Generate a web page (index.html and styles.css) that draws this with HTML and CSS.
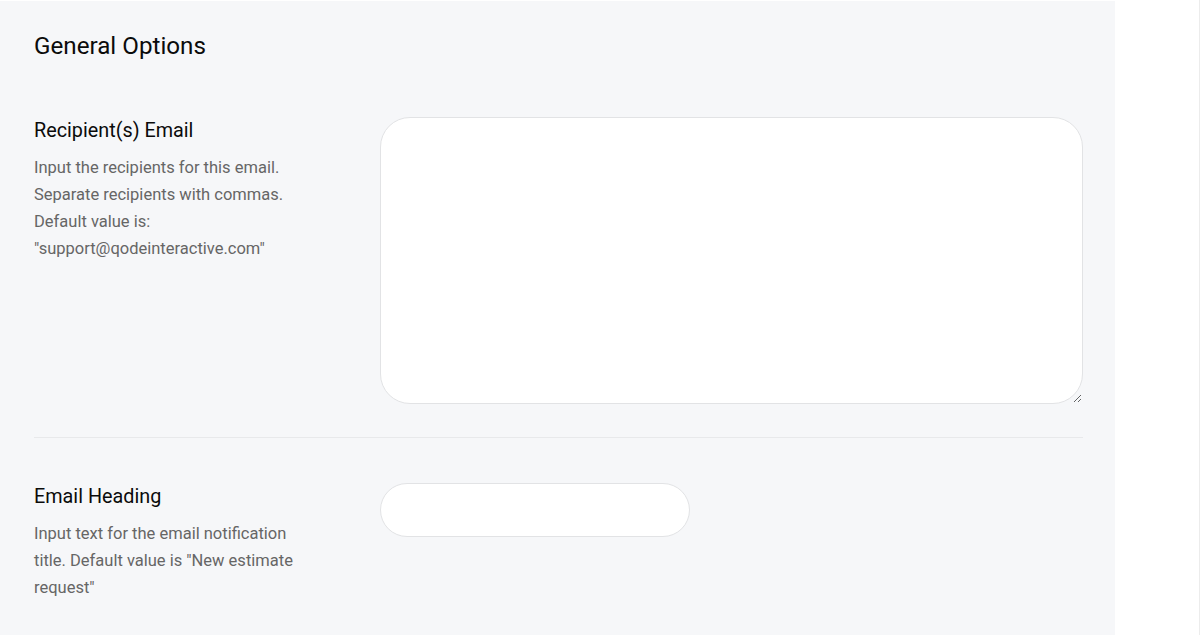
FILE: index.html
```html
<!DOCTYPE html>
<html lang="en">
<head>
<meta charset="utf-8">
<title>General Options</title>
<link rel="stylesheet" href="styles.css">
</head>
<body>
<div class="page">
  <main class="panel">
    <h2 class="panel-title">General Options</h2>
    <section class="option-row option-row--divided">
      <div class="option-label">
        <h3 class="option-heading">Recipient(s) Email</h3>
        <p class="option-desc">Input the recipients for this email. Separate recipients with commas. Default value is: "support@qodeinteractive.com"</p>
      </div>
      <div class="option-field">
        <textarea class="field-textarea"></textarea>
      </div>
    </section>
    <section class="option-row option-row--second">
      <div class="option-label">
        <h3 class="option-heading">Email Heading</h3>
        <p class="option-desc">Input text for the email notification title. Default value is "New estimate request"</p>
      </div>
      <div class="option-field">
        <input class="field-input" type="text">
      </div>
    </section>
  </main>
  <div class="spacer"></div>
  <div class="edge"></div>
</div>
</body>
</html>
```

FILE: styles.css
```css
html, body {
  margin: 0;
  padding: 0;
  background: #ffffff;
  height: 100%;
}

body {
  font-family: Roboto, "Liberation Sans", Arial, sans-serif;
  overflow: hidden;
}

.page {
  display: flex;
  height: 100%;
}

.panel {
  width: 1115px;
  flex: none;
  margin-top: 1px;
  background: #f6f7f9;
  padding: 30px 32px 0 34px;
  box-sizing: border-box;
  min-height: 634px;
}

.spacer {
  flex: 1;
}

.edge {
  width: 1px;
  background: #ececec;
}

.panel-title {
  margin: 0 0 56px;
  font-size: 24.2px;
  line-height: 30px;
  font-weight: 400;
  color: #0b0b0b;
}

.option-row {
  display: flex;
  gap: 76px;
}

.option-row--divided {
  padding-bottom: 33px;
  border-bottom: 1px solid #e8e9eb;
}

.option-row--second {
  padding-top: 45px;
}

.option-label {
  width: 270px;
  flex: none;
}

.option-heading {
  margin: 0;
  padding-top: 1px;
  font-size: 19.8px;
  line-height: 26px;
  font-weight: 400;
  color: #0b0b0b;
}

.option-desc {
  margin: 10px 0 0;
  font-size: 16.5px;
  line-height: 27px;
  color: #666666;
}

.option-field {
  flex: 1;
}

.field-textarea {
  display: block;
  width: 703px;
  height: 287px;
  box-sizing: border-box;
  border: 1px solid #e2e3e5;
  border-radius: 30px;
  background: #ffffff;
  padding: 15px 20px;
  font-family: inherit;
  font-size: 16px;
  outline: none;
}

.field-input {
  display: block;
  width: 310px;
  height: 54px;
  box-sizing: border-box;
  border: 1px solid #e2e3e5;
  border-radius: 27px;
  background: #ffffff;
  padding: 0 20px;
  font-family: inherit;
  font-size: 16px;
  outline: none;
}
```
